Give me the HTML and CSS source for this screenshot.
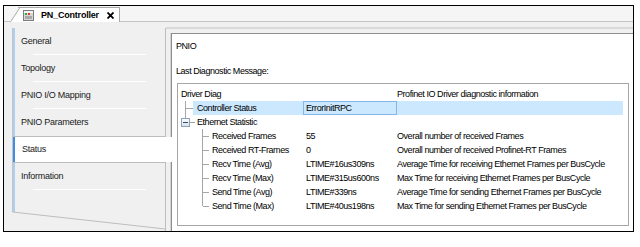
FILE: index.html
```html
<!DOCTYPE html>
<html lang="en">
<head>
	<meta charset="UTF-8">
	<title>PN_Controller</title>
	<link rel="stylesheet" href="styles.css">
</head>
<body>
	<div class="frame">
		<div class="tabstrip">
			<div class="doctab">
				<svg class="devicon" width="11" height="11" viewBox="0 0 11 11">
					<rect x="0.5" y="0.5" width="10" height="10" fill="#d6d6d6" stroke="#7c7c7c"/>
					<rect x="1" y="1" width="9" height="2" fill="#f4f4f4"/>
					<rect x="2" y="3" width="2" height="2" fill="#2fa83a"/>
					<rect x="5" y="3" width="2" height="2" fill="#e03a2e"/>
					<rect x="2" y="6" width="7" height="3" fill="#a9a9a9"/>
				</svg>
				<span class="doctitle">PN_Controller</span>
				<svg class="close" width="7" height="7" viewBox="0 0 7 7">
					<path d="M0.5 0.5 L6.5 6.5 M6.5 0.5 L0.5 6.5" stroke="#000" stroke-width="1.8"/>
				</svg>
			</div>
		</div>
		<div class="main">
			<!-- 左边的竖向标签 -->
			<div class="sidetabs">
				<div class="tabgroup top">
					<div class="stab">General</div>
					<div class="stab">Topology</div>
					<div class="stab">PNIO I/O Mapping</div>
					<div class="stab last">PNIO Parameters</div>
				</div>
				<div class="stab active">Status</div>
				<div class="tabgroup bottom">
					<div class="stab">Information</div>
				</div>
				<svg class="tail" width="154" height="42" viewBox="0 0 154 42">
					<line x1="0.5" y1="0" x2="0.5" y2="22" stroke="#c4c4c4"/>
					<rect x="1" y="0" width="2" height="22" fill="#acd0f3"/>
					<line x1="0.5" y1="22" x2="153.5" y2="39" stroke="#bdbdbd"/>
					<line x1="153.5" y1="0" x2="153.5" y2="42" stroke="#bdbdbd"/>
				</svg>
			</div>
			<!-- 右边的内容 -->
			<div class="content">
				<div class="panel">
					<div class="caption">PNIO</div>
					<div class="label">Last Diagnostic Message:</div>
					<div class="tree">
						<div class="row head">
							<span class="c1">Driver Diag</span>
							<span class="c2"></span>
							<span class="c3">Profinet IO Driver diagnostic information</span>
						</div>
						<div class="row l1 sel">
							<span class="c1">Controller Status</span>
							<span class="c2"><span class="cell">ErrorInitRPC</span></span>
							<span class="c3"></span>
						</div>
						<div class="row l1 node">
							<span class="c1"><i class="exp"></i>Ethernet Statistic</span>
							<span class="c2"></span>
							<span class="c3"></span>
						</div>
						<div class="row l2">
							<span class="c1">Received Frames</span>
							<span class="c2">55</span>
							<span class="c3">Overall number of received Frames</span>
						</div>
						<div class="row l2">
							<span class="c1">Received RT-Frames</span>
							<span class="c2">0</span>
							<span class="c3">Overall number of received Profinet-RT Frames</span>
						</div>
						<div class="row l2">
							<span class="c1">Recv Time (Avg)</span>
							<span class="c2">LTIME#16us309ns</span>
							<span class="c3">Average Time for receiving Ethernet Frames per BusCycle</span>
						</div>
						<div class="row l2">
							<span class="c1">Recv Time (Max)</span>
							<span class="c2">LTIME#315us600ns</span>
							<span class="c3">Max Time for receiving Ethernet Frames per BusCycle</span>
						</div>
						<div class="row l2">
							<span class="c1">Send Time (Avg)</span>
							<span class="c2">LTIME#339ns</span>
							<span class="c3">Average Time for sending Ethernet Frames per BusCycle</span>
						</div>
						<div class="row l2 end">
							<span class="c1">Send Time (Max)</span>
							<span class="c2">LTIME#40us198ns</span>
							<span class="c3">Max Time for sending Ethernet Frames per BusCycle</span>
						</div>
					</div>
				</div>
			</div>
		</div>
	</div>
</body>
</html>
```

FILE: styles.css
```css
body{
	margin: 0;
	background: #fff;
	font-family: "Liberation Sans", Arial, sans-serif;
	font-size: 9px;
	color: #000;
}
.frame{
	margin: 5px 0 0 3px;
	width: 629px;
	height: 225px;
	border: 1px solid #000;
	overflow: hidden;
	background: #f0f0f0;
}
/* 上面的文档标签 */
.tabstrip{
	height: 15px;
	border-bottom: 1px solid #c4c4c4;
	background: #f5f5f5;
	padding-left: 14px;
	display: flex;
	align-items: flex-end;
}
.doctab{
	position: relative;
	z-index: 0;
	height: 14px;
	margin-bottom: -1px;
	padding: 0 5px 0 5px;
	background: #fff;
	border-top: 1px solid #a8a8a8;
	border-right: 1px solid #a8a8a8;
	display: flex;
	align-items: center;
}
.doctab::before{
	content: "";
	position: absolute;
	z-index: -1;
	top: -1px;
	bottom: 0;
	left: -8px;
	width: 14px;
	background: #fff;
	border-left: 1px solid #a8a8a8;
	border-top: 1px solid #a8a8a8;
	transform-origin: 0 100%;
	transform: skewX(-33deg);
}
.devicon{
	display: block;
}
.doctitle{
	margin-left: 7px;
	font-size: 9px;
	font-weight: bold;
	letter-spacing: -0.2px;
}
.close{
	display: block;
	margin-left: 8px;
}
.main{
	display: flex;
	height: 209px;
}
/* 左边的标签 */
.sidetabs{
	flex: none;
	margin: 6px 0 0 8px;
	width: 154px;
	letter-spacing: -0.25px;
	color: #1a1a1a;
}
.tabgroup{
	border-left: 1px solid #c4c4c4;
	border-right: 1px solid #bdbdbd;
	background: #f0f0f0;
}
.tabgroup.top{
	border-bottom: 1px solid #bdbdbd;
}
.tabgroup.bottom{
	border-top: 1px solid #bdbdbd;
}
.stab{
	position: relative;
	height: 27px;
	line-height: 27px;
	padding-left: 8px;
	box-shadow: inset 2px 0 #acd0f3;
}
.stab::after{
	content: "";
	position: absolute;
	left: 20px;
	right: 19px;
	bottom: 0;
	height: 1px;
	background: #fff;
}
.stab.last::after{
	display: none;
}
.stab.active{
	height: 25px;
	line-height: 25px;
	margin-right: -6px;
	padding-left: 9px;
	background: #fff;
	border-left: 1px solid #c4c4c4;
	box-shadow: inset 2px 0 #3d8fe6;
}
.stab.active::after{
	display: none;
}
.tail{
	display: block;
}
/* 右边的面板 */
.content{
	flex: 1;
	min-width: 0;
	margin-top: 5px;
	padding: 4px 0 0 5px;
	border-top: 2px solid #dadada;
}
.panel{
	height: 100%;
	padding-left: 4px;
	border-top: 1px solid #8e8e8e;
	border-left: 1px solid #8e8e8e;
	box-shadow: -1px 0 #d4d4d4;
	background: #fff;
	letter-spacing: -0.45px;
}
.caption{
	padding-top: 5px;
	line-height: 14px;
}
.label{
	margin-top: 11px;
	line-height: 14px;
}
.tree{
	margin: 5px 4px 0 1px;
	padding: 3px 0 12px 0;
	border: 1px solid #a6a6a6;
}
.row{
	display: grid;
	grid-template-columns: 128px 91px 1fr;
	height: 14px;
	line-height: 14px;
	white-space: nowrap;
}
.row span{
	position: relative;
}
.row.head .c1{
	padding-left: 3px;
}
.row.l1 .c1{
	padding-left: 19px;
}
.row.l2 .c1{
	padding-left: 34px;
}
.row.sel{
	background: linear-gradient(#cce8ff, #cce8ff) 15px 0 / calc(100% - 20px) 100% no-repeat;
}
.cell{
	display: block;
	margin-left: -3px;
	padding-left: 2px;
	height: 12px;
	line-height: 12px;
	border: 1px solid #84b6e6;
	background: #cce8ff;
}
/* 树的线 */
.row.sel .c1::before{
	content: "";
	position: absolute;
	left: 7px;
	top: 0;
	height: 14px;
	border-left: 1px solid #a6a6a6;
}
.row.sel .c1::after{
	content: "";
	position: absolute;
	left: 8px;
	top: 7px;
	width: 7px;
	border-top: 1px solid #a6a6a6;
}
.row.node .c1::before{
	content: "";
	position: absolute;
	left: 7px;
	top: 0;
	height: 3px;
	border-left: 1px solid #a6a6a6;
}
.row.node .c1::after{
	content: "";
	position: absolute;
	left: 12px;
	top: 7px;
	width: 5px;
	border-top: 1px solid #a6a6a6;
}
.exp{
	position: absolute;
	left: 3px;
	top: 3px;
	width: 7px;
	height: 7px;
	border: 1px solid #8ea2b8;
	background: linear-gradient(#fdfdfd, #d9e1ea);
}
.exp::after{
	content: "";
	position: absolute;
	left: 1px;
	top: 3px;
	width: 5px;
	height: 1px;
	background: #2c4f7c;
}
.row.l2 .c1::before{
	content: "";
	position: absolute;
	left: 24px;
	top: 0;
	height: 14px;
	border-left: 1px solid #a6a6a6;
}
.row.l2.end .c1::before{
	height: 7px;
}
.row.l2 .c1::after{
	content: "";
	position: absolute;
	left: 25px;
	top: 7px;
	width: 6px;
	border-top: 1px solid #a6a6a6;
}
```
